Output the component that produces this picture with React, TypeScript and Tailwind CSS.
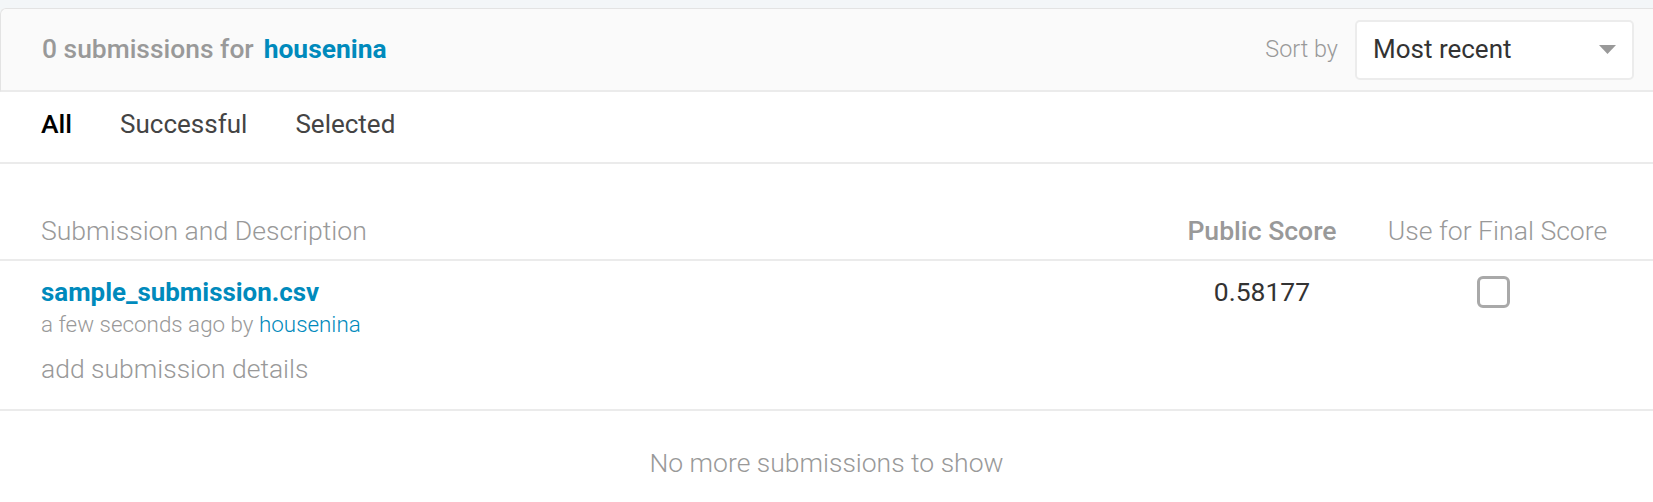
import React from "react";

export default function App() {
  const font = { fontFamily: "Roboto, 'Liberation Sans', sans-serif" };
  return (
    <div className="w-[1653px] h-[502px] bg-[#f3f6f8] pt-[8px] overflow-hidden" style={font}>
      <div className="bg-white h-[494px] rounded-tl-[6px]">
        {/* Header */}
        <div className="h-[84px] bg-[#fafafa] rounded-tl-[6px] border-t border-l border-[#e3e3e3] flex items-center justify-between pl-[41px] pr-[19px] border-b-2 border-b-[#ebebeb]">
          <div className="text-[26.4px] font-medium text-[#999999] flex items-center gap-[10px]">
            <span>0 submissions for</span>
            <a className="text-[#008abc] font-bold">housenina</a>
          </div>
          <div className="flex items-center gap-[17px]">
            <span className="text-[23.4px] font-light text-[#999999]">Sort by</span>
            <div className="w-[279px] h-[60px] bg-white border-2 border-[#ececec] rounded-[5px] flex items-center justify-between pl-[16px] pr-[16px]">
              <span className="text-[26px] text-[#333333]">Most recent</span>
              <svg width="17" height="9" viewBox="0 0 17 9">
                <polygon points="0,0 17,0 8.5,9" fill="#999999" />
              </svg>
            </div>
          </div>
        </div>
        {/* Tabs */}
        <div className="h-[72px] flex items-center gap-[48px] pl-[41px] pb-[6px] border-b-2 border-[#ebebeb]">
          <span className="text-[26.5px] font-medium text-black">All</span>
          <span className="text-[26px] text-[#444444]">Successful</span>
          <span className="text-[26px] text-[#444444]">Selected</span>
        </div>
        {/* Column header */}
        <div className="h-[97px] flex items-start pt-[50px] border-b-2 border-[#ebebeb]">
          <div className="flex-1 pl-[41px] text-[26.6px] font-light leading-[34px] text-[#999999]">Submission and Description</div>
          <div className="w-[200px] text-center text-[26.6px] font-medium leading-[34px] text-[#999999]">Public Score</div>
          <div className="w-[271px] text-center text-[26.6px] font-light leading-[34px] text-[#999999]">Use for Final Score</div>
          <div className="w-[20px]" />
        </div>
        {/* Row */}
        <div className="h-[150px] flex items-start border-b-2 border-[#ebebeb]">
          <div className="flex-1 pl-[41px] pt-[16px] flex flex-col">
            <a className="text-[25.9px] font-bold leading-[30px] text-[#008abc]">sample_submission.csv</a>
            <div className="mt-[4px] text-[22.4px] font-light leading-[26px] text-[#999999]">
              a few seconds ago by <a className="text-[#008abc]">housenina</a>
            </div>
            <div className="mt-[17px] text-[26.5px] font-light leading-[30px] text-[#999999]">add submission details</div>
          </div>
          <div className="w-[200px] pt-[16px] text-center text-[26.5px] font-normal leading-[30px] text-[#333333]">0.58177</div>
          <div className="w-[271px] pt-[15px] flex justify-center">
            <div className="w-[33px] h-[32px] border-[3px] border-[#a9a9a9] rounded-[6px] mr-[9px]" />
          </div>
          <div className="w-[20px]" />
        </div>
        {/* Footer */}
        <div className="pt-[37px] text-center text-[26.5px] font-light leading-[30px] text-[#999999]">No more submissions to show</div>
      </div>
    </div>
  );
}
